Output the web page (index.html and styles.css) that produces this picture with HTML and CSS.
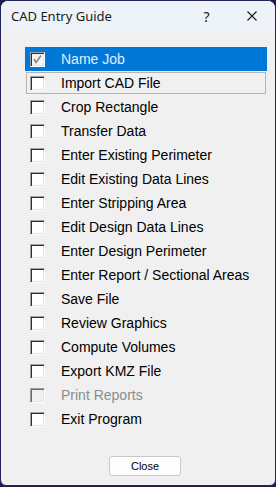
FILE: index.html
```html
<!DOCTYPE html>
<html lang="en">
<head>
    <meta charset="utf-8">
    <title>CAD Entry Guide</title>
    <link rel="stylesheet" href="styles.css">
</head>
<body>
    <div class="window">
        <div class="titlebar">
            <span class="title">CAD Entry Guide</span>
            <button class="tb-btn help">?</button>
            <button class="tb-btn close-x">
                <svg width="10" height="10" viewBox="0 0 10 10"><path d="M0.5 0.5 L9.5 9.5 M9.5 0.5 L0.5 9.5" stroke="#1a1a1a" stroke-width="1.1" fill="none"/></svg>
            </button>
        </div>

        <div class="content">
            <ul class="steps">
                <li class="row selected"><span class="box checked"><svg width="13" height="13" viewBox="0 0 13 13"><path d="M3 6 L5 9.5 L10 2.5" stroke="#8a8a8a" stroke-width="1.6" fill="none"/></svg></span><span class="label">Name Job</span></li>
                <li class="row focus"><span class="box"></span><span class="label">Import CAD File</span></li>
                <li class="row"><span class="box"></span><span class="label">Crop Rectangle</span></li>
                <li class="row"><span class="box"></span><span class="label">Transfer Data</span></li>
                <li class="row"><span class="box"></span><span class="label">Enter Existing Perimeter</span></li>
                <li class="row"><span class="box"></span><span class="label">Edit Existing Data Lines</span></li>
                <li class="row"><span class="box"></span><span class="label">Enter Stripping Area</span></li>
                <li class="row"><span class="box"></span><span class="label">Edit Design Data Lines</span></li>
                <li class="row"><span class="box"></span><span class="label">Enter Design Perimeter</span></li>
                <li class="row"><span class="box"></span><span class="label">Enter Report / Sectional Areas</span></li>
                <li class="row"><span class="box"></span><span class="label">Save File</span></li>
                <li class="row"><span class="box"></span><span class="label">Review Graphics</span></li>
                <li class="row"><span class="box"></span><span class="label">Compute Volumes</span></li>
                <li class="row"><span class="box"></span><span class="label">Export KMZ File</span></li>
                <li class="row disabled"><span class="box"></span><span class="label">Print Reports</span></li>
                <li class="row"><span class="box"></span><span class="label">Exit Program</span></li>
            </ul>

            <div class="footer">
                <button class="close-btn">Close</button>
            </div>
        </div>
    </div>
</body>
</html>
```

FILE: styles.css
```css
* { margin: 0; padding: 0; box-sizing: border-box; }
html, body {
    width: 276px;
    height: 487px;
    background: #1c1c4e;
    overflow: hidden;
}
.window {
    width: 276px;
    height: 486px;
    border: 1px solid #24245c;
    border-radius: 8px 8px 6px 6px;
    overflow: hidden;
    display: flex;
    flex-direction: column;
    background: #f0f0f0;
}
.titlebar {
    height: 30px;
    background: #eef3f9;
    display: flex;
    align-items: center;
    flex-shrink: 0;
}
.title {
    flex: 1;
    padding-left: 10px;
    font-family: "Noto Sans", sans-serif;
    font-size: 13px;
    color: #1a1a1a;
}
.tb-btn {
    height: 30px;
    border: none;
    background: transparent;
    display: flex;
    align-items: center;
    justify-content: center;
    font-family: "Noto Sans", sans-serif;
    color: #1a1a1a;
}
.help { width: 45px; font-size: 14px; }
.close-x { width: 46px; }

.content {
    flex: 1;
    display: flex;
    flex-direction: column;
    padding: 16px 8px 0 24px;
}
.steps { list-style: none; }
.row {
    height: 24px;
    display: flex;
    align-items: center;
    padding-left: 5px;
    font-family: "Liberation Sans", Arial, sans-serif;
    font-size: 14px;
    color: #000;
}
.row.selected { background: #0078d7; color: #e4ecf8; }
.row.focus { outline: 1px solid #b4b4b4; outline-offset: -2px; }
.row.disabled { color: #8d8d8d; }

.box {
    width: 15px;
    height: 15px;
    flex-shrink: 0;
    background: #fff;
    border: 1px solid;
    border-color: #a0a0a0 #fff #fff #a0a0a0;
    box-shadow: inset 1px 1px #303030, inset -1px -1px #e3e3e3;
    display: flex;
    align-items: center;
    justify-content: center;
}
.box.checked { background: #f4f4f4; }
.disabled .box { background: #f0f0f0; box-shadow: inset 1px 1px #696969, inset -1px -1px #e3e3e3; }
.label { margin-left: 16px; white-space: nowrap; }

.footer {
    display: flex;
    justify-content: center;
    padding: 25px 0 0 0;
    margin-left: -2px;
}
.close-btn {
    width: 72px;
    height: 20px;
    background: #fdfdfd;
    border: 1px solid #c8c8c8;
    border-radius: 3px;
    font-family: "Liberation Sans", Arial, sans-serif;
    font-size: 11px;
    color: #000;
}
```
